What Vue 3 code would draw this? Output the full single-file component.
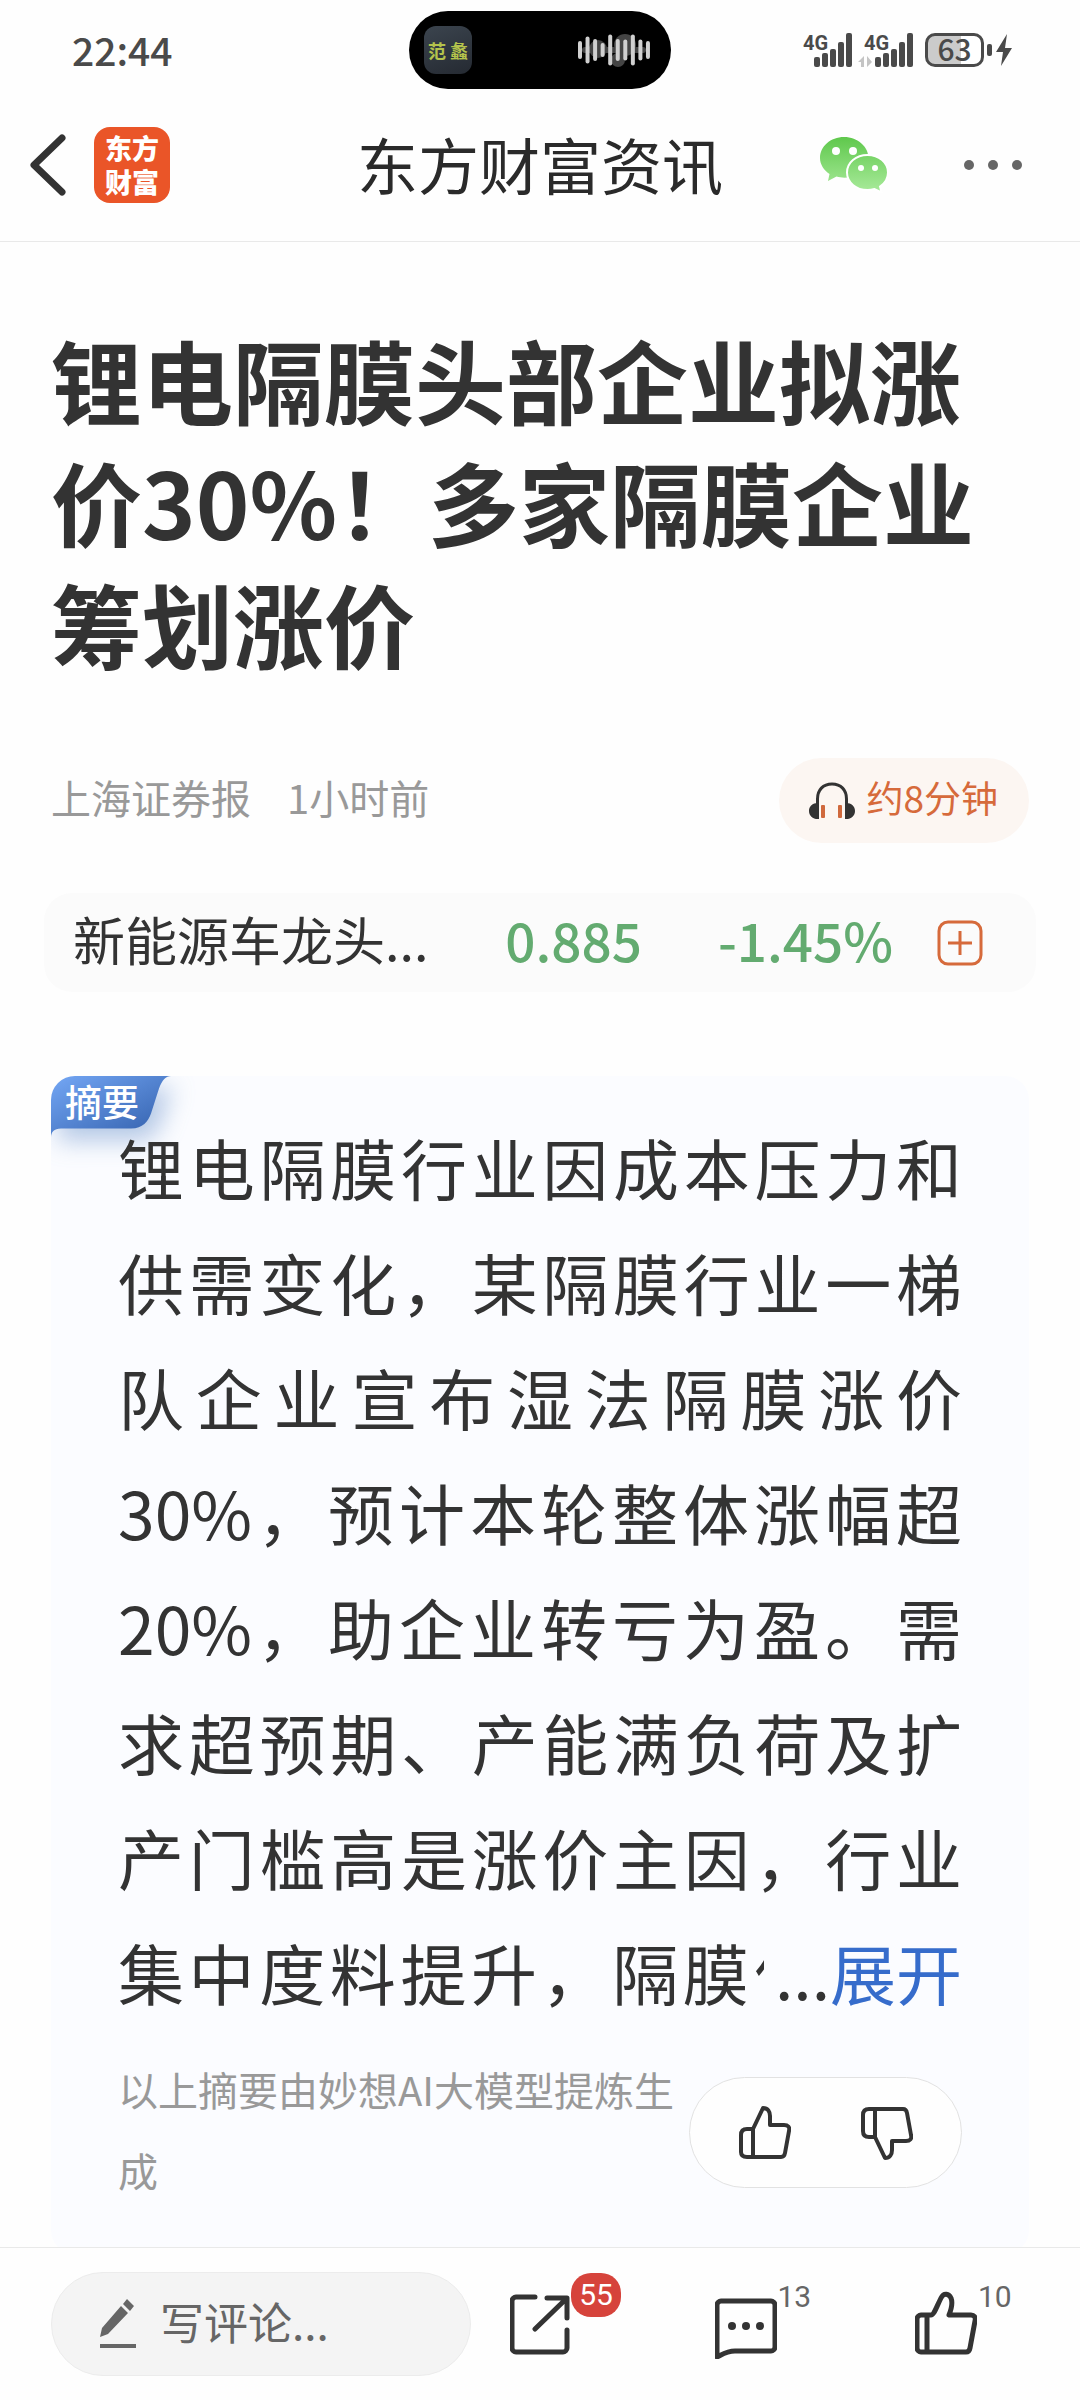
<!--
  资讯详情页：状态栏 + 顶部导航 + 正文 + 底部评论栏
-->

<template>
  <div class="page">
    <!-- 状态栏 -->
    <div class="status-bar">
      <span class="time">22:44</span>

      <div class="island">
        <span class="cover"><i>范</i><i>蠡</i></span>
        <svg class="wave" viewBox="0 0 72 34" aria-hidden="true">
          <g fill="#444">
            <circle cx="20" cy="16" r="9" />
            <circle cx="47" cy="12" r="11" />
            <circle cx="40" cy="27" r="7" />
            <rect x="4" y="14" width="64" height="6" rx="3" />
          </g>
          <rect
            v-for="(h, i) in waveBars"
            :key="i"
            :x="i * 7.55"
            :y="17 - h / 2"
            width="4"
            :height="h"
            rx="2"
            fill="#d0d0d0"
          />
        </svg>
      </div>

      <div class="status-icons">
        <div v-for="n in 2" :key="n" class="signal">
          <span>4G</span>
          <svg viewBox="0 0 49 34" aria-hidden="true">
            <g fill="#4a4a4a">
              <rect x="11" y="24" width="6" height="10" rx="2" />
              <rect x="19" y="20" width="6" height="14" rx="2" />
              <rect x="27" y="16" width="6" height="18" rx="2" />
              <rect x="35" y="9" width="6" height="25" rx="2" />
              <rect x="43" y="0" width="6" height="34" rx="2" />
            </g>
            <path v-if="n === 2" d="M-6 29l6-6v11h-3v-5zM3 23l5 6-5 5z" fill="#c4c4c4" />
          </svg>
        </div>
        <div class="battery"><span>63</span></div>
        <svg class="bolt" viewBox="0 0 25 34" aria-hidden="true">
          <rect x="0" y="11" width="5" height="12" rx="2" fill="#4a4a4a" />
          <path d="M20 1L9 19h7l-2 14 11-18h-7z" fill="#4a4a4a" />
        </svg>
      </div>
    </div>

    <!-- 顶部导航 -->
    <header class="nav-bar">
      <div class="nav-left">
        <button aria-label="返回">
          <svg width="36" height="62" viewBox="0 0 36 62">
            <path d="M32 4L4 31l28 27" fill="none" stroke="#333" stroke-width="7" stroke-linecap="round" stroke-linejoin="round" />
          </svg>
        </button>
        <a href="#" class="logo"><span>东方</span><span>财富</span></a>
      </div>
      <h2>东方财富资讯</h2>
      <div class="nav-right">
        <button aria-label="分享到微信">
          <svg width="68" height="56" viewBox="0 0 68 56">
            <defs>
              <linearGradient id="wx" x1="0" y1="0" x2="0" y2="56" gradientUnits="userSpaceOnUse">
                <stop offset="0" stop-color="#5fc84c" />
                <stop offset="1" stop-color="#aaeb9c" />
              </linearGradient>
            </defs>
            <path d="M24 0C10.500 0 0 9.400 0 21c0 6.500 3.800 12 9.500 16L8 44l8.500-4.500c2.500.7 5 1.200 8 1.200C38 40.700 48.500 32 48.500 21S38 0 24 0z" fill="url(#wx)" />
            <path d="M47.500 18C36 18 27 25.800 27 35.500S36 53 47.500 53c2.500 0 5-.4 7-1l7 3.500-1.500-6c5-3.200 8-8.300 8-14C68 25.800 59 18 47.500 18z" fill="url(#wx)" stroke="#fff" stroke-width="2" />
            <g fill="#fff">
              <circle cx="16" cy="14" r="4" />
              <circle cx="33" cy="14" r="4" />
              <circle cx="41" cy="31" r="3" />
              <circle cx="55" cy="31" r="3" />
            </g>
          </svg>
        </button>
        <button aria-label="更多">
          <svg width="58" height="12" viewBox="0 0 58 12" fill="#666">
            <circle cx="5" cy="6" r="5" />
            <circle cx="29" cy="6" r="5" />
            <circle cx="53" cy="6" r="5" />
          </svg>
        </button>
      </div>
    </header>

    <!-- 正文 -->
    <main class="content">
      <h1>锂电隔膜头部企业拟涨价30%！多家隔膜企业筹划涨价</h1>

      <div class="meta">
        <span>上海证券报</span>
        <span>1小时前</span>
        <button class="listen">
          <svg width="46" height="38" viewBox="0 0 46 38">
            <path d="M8.500 34V17C8.500 8 14 2 23 2s14.500 6 14.500 15v17" fill="none" stroke="#333" stroke-width="3" />
            <path d="M10 21v16C4 37.500 0 34 0 29s4-8.500 10-8zM36 21v16c6 .5 10-3 10-8s-4-8.500-10-8z" fill="#333" />
            <rect x="12" y="23" width="4" height="13" rx="1" fill="#d0693d" />
            <rect x="29" y="23" width="4" height="13" rx="1" fill="#d0693d" />
          </svg>
          <span>约8分钟</span>
        </button>
      </div>

      <div class="stock">
        <span class="stock-name">{{ stock.name }}</span>
        <span class="stock-num">{{ stock.price }}</span>
        <span class="stock-num change">{{ stock.change }}</span>
        <button aria-label="加自选">
          <svg width="46" height="46" viewBox="0 0 46 46" fill="none" stroke="#d66a3b" stroke-width="3">
            <rect x="2" y="2" width="42" height="42" rx="9" />
            <path d="M23 11v24M11 23h24" />
          </svg>
        </button>
      </div>

      <section class="summary">
        <div class="tag">
          <svg viewBox="0 0 120 62" aria-hidden="true">
            <defs>
              <linearGradient id="tag" x1="0" y1="0" x2="1" y2="1">
                <stop offset="0" stop-color="#74a7f5" />
                <stop offset="1" stop-color="#2f5ca8" />
              </linearGradient>
            </defs>
            <path d="M0 62c0-6 3-9.500 10-9.500h70c12 0 17-7 20-15l8-25C111 4 115 0 120 0H0z" fill="url(#tag)" />
          </svg>
          <span>摘要</span>
        </div>

        <p class="summary-text">锂电隔膜行业因成本压力和供需变化，某隔膜行业一梯队企业宣布湿法隔膜涨价30%，预计本轮整体涨幅超20%，助企业转亏为盈。需求超预期、产能满负荷及扩产门槛高是涨价主因，行业集中度料提升，隔膜价<span class="more">...<button>展开</button></span></p>

        <div class="summary-foot">
          <p>以上摘要由妙想AI大模型提炼生成</p>
          <div class="vote">
            <button aria-label="有用">
              <svg width="52" height="54" viewBox="0 0 52 54">
                <path d="M14 23L24 2c5 0 7 4 7 8v9h14c4 0 6 2 5 6l-4 22c-.5 3-2 4-4 4H8c-4 0-6-2-6-5V29c0-4 2-6 6-6zM14 23v28" />
              </svg>
            </button>
            <button aria-label="没用">
              <svg width="52" height="54" viewBox="0 0 52 54">
                <path d="M14 31l10 21c5 0 7-4 7-8v-9h14c4 0 6-2 5-6L46 7c-.5-3-2-4-4-4H8C4 3 2 5 2 9v16c0 4 2 6 6 6zM14 31V3" />
              </svg>
            </button>
          </div>
        </div>
      </section>
    </main>

    <!-- 底部评论栏 -->
    <footer class="bottom-bar">
      <label class="comment-box">
        <svg width="36" height="50" viewBox="0 0 36 50" fill="#666" aria-hidden="true">
          <path d="M21 7l7 7L8 35l-8 3 2-9zM27 0l7 7-4 5-7-7z" />
          <rect y="45" width="36" height="4" />
        </svg>
        <input type="text" placeholder="写评论..." aria-label="写评论">
      </label>

      <div class="tools">
        <button aria-label="分享">
          <svg width="66" height="70" viewBox="0 0 66 70">
            <path d="M25 8H6c-2 0-4 2-4 4v47c0 2 2 4 4 4h47c2 0 4-2 4-4V41M37 9h20v20M56 10L25 40" />
          </svg>
          <span class="badge">55</span>
        </button>
        <button aria-label="评论">
          <svg width="62" height="70" viewBox="0 0 62 70">
            <path d="M6 12h50c2 0 4 2 4 4v42c0 2-2 4-4 4H20C12 62 8 65 2 68V16c0-2 2-4 4-4z" />
            <g class="dots">
              <circle cx="17" cy="37" r="4" />
              <circle cx="31" cy="37" r="4" />
              <circle cx="45" cy="37" r="4" />
            </g>
          </svg>
          <span class="count">13</span>
        </button>
        <button aria-label="点赞">
          <svg width="62" height="70" viewBox="0 0 62 70">
            <path d="M6 26h10c3 0 5-7 10-17 3-6 8-4 10 0 2 5 0 12-2 17h22c3 0 5 2 4 6l-5 27c-.5 3-2 4-4 4H6c-2 0-4-2-4-4V30c0-2 2-4 4-4zM12 26v37" />
          </svg>
          <span class="count">10</span>
        </button>
      </div>
    </footer>
  </div>
</template>

<script setup>
const waveBars = [18, 27, 22, 14, 31, 22, 21, 31, 21, 18]

const stock = { name: '新能源车龙头...', price: '0.885', change: '-1.45%' }
</script>

<style>
body {
  margin: 0;
  background: #fff;
}
</style>

<style scoped>
.page {
  display: flex;
  flex-direction: column;
  height: 100vh;
  background: #fefefe;
  color: #333;
  font-family: 'Noto Sans CJK SC', 'Noto Sans', sans-serif;
}

button {
  display: block;
  padding: 0;
  border: none;
  background: none;
  color: inherit;
  font: inherit;
  cursor: pointer;
}

svg {
  display: block;
}

h1,
h2,
p {
  margin: 0;
}

/* ---------- 状态栏 ---------- */
.status-bar {
  display: grid;
  grid-template-columns: 1fr auto 1fr;
  align-items: center;
  padding: 11px 68px 0;
  color: #4a4a4a;
}

.time {
  padding: 0 0 2px 4px;
  font-size: 39px;
  font-weight: 500;
  line-height: 48px;
}

.island {
  display: flex;
  align-items: center;
  justify-content: space-between;
  box-sizing: border-box;
  width: 262px;
  height: 78px;
  padding: 0 21px 0 15px;
  border-radius: 39px;
  background: #000;
}

.cover {
  display: flex;
  align-items: center;
  justify-content: center;
  gap: 4px;
  width: 48px;
  height: 48px;
  border-radius: 12px;
  background: linear-gradient(160deg, #3b444e, #252a32);
  color: #b4c34c;
  font-size: 18px;
  font-weight: 700;
}

.cover i {
  font-style: normal;
}

.wave {
  width: 72px;
  height: 34px;
}

.status-icons {
  display: flex;
  justify-content: flex-end;
}

.signal {
  position: relative;
  width: 49px;
  height: 34px;
  margin-right: 12px;
}

.signal span {
  position: absolute;
  top: -2px;
  left: 0;
  font-family: Roboto, sans-serif;
  font-size: 20px;
  font-weight: 700;
  line-height: 24px;
}

.signal svg {
  overflow: visible;
}

.battery {
  box-sizing: border-box;
  width: 59px;
  height: 34px;
  border: 3px solid #4a4a4a;
  border-radius: 10px;
  background: linear-gradient(90deg, #cbcbcb 63%, #fff 63%);
  font-size: 30px;
  font-weight: 500;
  line-height: 25px;
  text-align: center;
}

.bolt {
  width: 25px;
  height: 34px;
  margin-left: 3px;
}

/* ---------- 顶部导航 ---------- */
.nav-bar {
  display: grid;
  grid-template-columns: 1fr auto 1fr;
  align-items: center;
  height: 152px;
  padding: 0 58px 0 30px;
  border-bottom: 1px solid #e9e9e9;
}

.nav-left,
.nav-right {
  display: flex;
  align-items: center;
}

.nav-left {
  gap: 28px;
}

.nav-right {
  justify-content: flex-end;
  gap: 76px;
}

.nav-bar h2 {
  margin-left: 28px;
  padding-bottom: 2px;
  color: #2a2a2a;
  font-size: 61px;
  font-weight: 400;
  line-height: 80px;
}

.logo {
  display: flex;
  flex-direction: column;
  align-items: center;
  justify-content: center;
  width: 76px;
  height: 76px;
  border-radius: 16px;
  background: #ea5528;
  color: #fff;
  font-size: 27px;
  font-weight: 900;
  line-height: 34px;
  text-decoration: none;
}

/* ---------- 正文 ---------- */
.content {
  flex: 1;
  min-height: 0;
  padding: 75px 51px 0;
  overflow-y: auto;
  scrollbar-width: none;
}

h1 {
  font-size: 91px;
  font-weight: 700;
  line-height: 122px;
}

.meta {
  display: flex;
  align-items: center;
  gap: 36px;
  margin-top: 75px;
  color: #999;
  font-size: 40px;
  line-height: 60px;
}

.meta span {
  padding-bottom: 8px;
}

.listen {
  display: flex;
  align-items: center;
  gap: 11px;
  height: 85px;
  margin-left: auto;
  padding: 0 31px 0 30px;
  border-radius: 43px;
  background: #fcf6f2;
  color: #d66a3b;
  font-size: 37px;
}

/* ---------- 相关股票 ---------- */
.stock {
  display: flex;
  align-items: center;
  height: 99px;
  margin: 50px -7px 0;
  padding: 0 53px 0 29px;
  border-radius: 28px;
  background: #fbfbfb;
  font-size: 52px;
  line-height: 72px;
}

.stock span {
  padding-bottom: 8px;
}

.stock-name {
  flex: 1;
}

.stock-num {
  color: #63ab70;
  font-size: 53px;
  font-weight: 500;
}

.change {
  width: 251px;
  margin-right: 44px;
  text-align: right;
}

/* ---------- AI 摘要卡片 ---------- */
.summary {
  position: relative;
  margin-top: 84px;
  padding: 33px 67px 39px;
  border-radius: 24px;
  background: #fbfcff;
  overflow: hidden;
}

.tag {
  position: absolute;
  top: 0;
  left: 0;
  width: 120px;
  height: 62px;
}

.tag svg {
  filter: drop-shadow(8px 12px 12px rgba(70, 120, 190, 0.4));
  overflow: visible;
}

.tag span {
  position: absolute;
  top: 0;
  left: 14px;
  color: #fff;
  font-size: 37px;
  font-weight: 500;
  line-height: 50px;
}

.summary-text {
  position: relative;
  font-size: 66px;
  line-height: 115px;
  text-align: justify;
  text-align-last: justify;
}

/* 盖住末行被截断的文字 */
.more {
  display: inline-flex;
  justify-content: flex-end;
  width: 198px;
  margin-left: -60px;
  background: #fbfcff;
}

.more button {
  color: #366ccb;
}

.summary-foot {
  display: flex;
  align-items: center;
  margin-top: 20px;
  color: #999;
  font-size: 40px;
  line-height: 81px;
}

.summary-foot p {
  flex: 1;
  padding-bottom: 4px;
}

.vote {
  display: flex;
  align-items: center;
  justify-content: center;
  gap: 70px;
  box-sizing: border-box;
  width: 273px;
  height: 111px;
  padding-top: 2px;
  border: 1px solid #e2e2e2;
  border-radius: 56px;
  background: #fefefe;
}

.vote path {
  fill: none;
  stroke: #333;
  stroke-width: 4;
  stroke-linejoin: round;
}

/* ---------- 底部评论栏 ---------- */
.bottom-bar {
  display: flex;
  align-items: center;
  box-sizing: border-box;
  height: 153px;
  padding-left: 51px;
  border-top: 1px solid #e9e9e9;
}

.comment-box {
  display: flex;
  align-items: center;
  gap: 24px;
  box-sizing: border-box;
  width: 420px;
  height: 104px;
  padding: 0 48px;
  border: 1px solid #ececec;
  border-radius: 52px;
  background: #f4f4f4;
}

.comment-box svg {
  flex: none;
}

.comment-box input {
  flex: 1;
  min-width: 0;
  padding: 0 0 6px;
  border: none;
  outline: none;
  background: none;
  color: #333;
  font: inherit;
  font-size: 44px;
  line-height: 64px;
}

.comment-box input::placeholder {
  color: #666;
  opacity: 1;
}

.tools {
  display: flex;
  flex: 1;
  justify-content: space-between;
  padding: 0 103px 0 39px;
}

.tools button {
  position: relative;
}

.tools path {
  fill: none;
  stroke: #333;
  stroke-width: 5;
  stroke-linecap: round;
  stroke-linejoin: round;
}

.dots {
  fill: #333;
}

.badge,
.count {
  position: absolute;
  font-family: Roboto, sans-serif;
  font-size: 30px;
  line-height: 44px;
}

.badge {
  top: -16px;
  left: 61px;
  width: 50px;
  border-radius: 20px;
  background: #d6433b;
  color: #fff;
  text-align: center;
}

.count {
  top: -14px;
  left: 63px;
  color: #666;
}
</style>
